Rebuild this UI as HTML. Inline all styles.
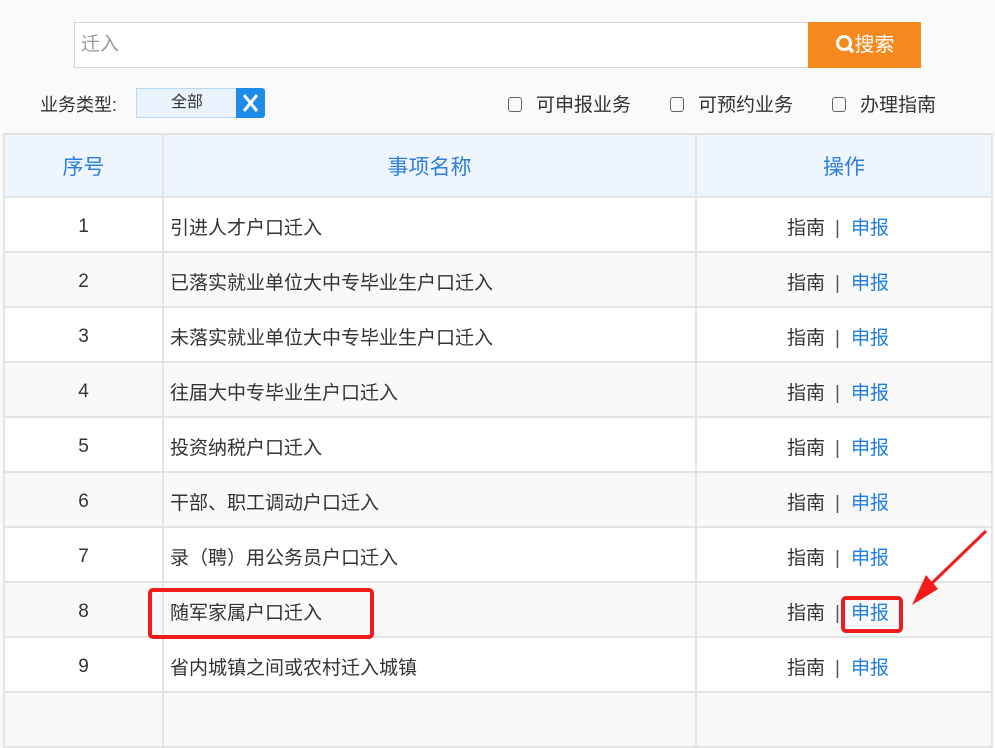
<!DOCTYPE html>
<html><head><meta charset="utf-8">
<style>
*{margin:0;padding:0;box-sizing:border-box}
body{width:995px;height:702px;overflow:hidden;background:#fafafa;font-family:"Liberation Sans","Noto Sans CJK SC",sans-serif;color:#333;position:relative}
.abs{position:absolute}
.search{left:74px;top:22px;width:735px;height:46px;border:1px solid #d6d6d6;background:#fff;font-size:19px;color:#999;line-height:44px;padding-left:6px}
.btn{left:808px;top:22px;width:113px;height:46px;background:#f5891e;color:#fff;font-size:20px;line-height:46px;text-align:center}
.lbl{left:40px;top:91px;font-size:18px;color:#333}
.sel{left:136px;top:88px;width:102px;height:30px;background:#eaf3fd;border:1px solid #b9d8f5;font-size:16px;text-align:center;line-height:28px}
.x{left:236px;top:88px;width:29px;height:30px;background:#1f8be8;border-radius:0 3px 3px 0}
.cb{font-size:19px;top:90px}
.cb i{display:inline-block;width:14px;height:15px;border:1px solid #666;border-radius:3px;vertical-align:-1px;margin-right:14px}
table{position:absolute;left:3px;top:133px;width:990px;border-collapse:collapse;border-top:2px solid #1e87e6}
td,th{border:2px solid #e4e4e4;font-size:19px;font-weight:normal}
th{height:63px;background:#eef5fd;color:#2c7fde;font-size:21px}
td{height:55px;background:#fff;padding-top:3px}
td.n{padding-top:5px}
tr.e td{background:#f9f9f9}
td.n{text-align:center;width:159px}
td.t{padding-left:6px;width:533px}
td.o{text-align:left;padding-left:90px;color:#333}
td.o span{color:#1e7fe0}
td.o b{font-weight:normal;color:#555;margin:0 11px 0 10px}
</style></head><body>
<div class="abs search">迁入</div>
<div class="abs btn"><svg width="20" height="20" viewBox="0 0 20 20" style="vertical-align:-3px"><circle cx="9" cy="9" r="6.5" fill="none" stroke="#fff" stroke-width="3"/><path d="M13 13l5 5" stroke="#fff" stroke-width="3.5"/></svg>搜索</div>
<div class="abs lbl">业务类型:</div>
<div class="abs sel">全部</div>
<div class="abs x"><svg width="29" height="30"><path d="M8 7l13 16M21 7L8 23" stroke="#fff" stroke-width="3"/></svg></div>
<div class="abs cb" style="left:508px"><i></i>可申报业务</div>
<div class="abs cb" style="left:670px"><i></i>可预约业务</div>
<div class="abs cb" style="left:832px"><i></i>办理指南</div>
<table>
<tr><th>序号</th><th>事项名称</th><th>操作</th></tr>
<tr><td class="n">1</td><td class="t">引进人才户口迁入</td><td class="o">指南<b>|</b><span>申报</span></td></tr>
<tr class="e"><td class="n">2</td><td class="t">已落实就业单位大中专毕业生户口迁入</td><td class="o">指南<b>|</b><span>申报</span></td></tr>
<tr><td class="n">3</td><td class="t">未落实就业单位大中专毕业生户口迁入</td><td class="o">指南<b>|</b><span>申报</span></td></tr>
<tr class="e"><td class="n">4</td><td class="t">往届大中专毕业生户口迁入</td><td class="o">指南<b>|</b><span>申报</span></td></tr>
<tr><td class="n">5</td><td class="t">投资纳税户口迁入</td><td class="o">指南<b>|</b><span>申报</span></td></tr>
<tr class="e"><td class="n">6</td><td class="t">干部、职工调动户口迁入</td><td class="o">指南<b>|</b><span>申报</span></td></tr>
<tr><td class="n">7</td><td class="t">录（聘）用公务员户口迁入</td><td class="o">指南<b>|</b><span>申报</span></td></tr>
<tr class="e"><td class="n">8</td><td class="t">随军家属户口迁入</td><td class="o">指南<b>|</b><span>申报</span></td></tr>
<tr><td class="n">9</td><td class="t">省内城镇之间或农村迁入城镇</td><td class="o">指南<b>|</b><span>申报</span></td></tr>
<tr class="e"><td class="n"></td><td class="t"></td><td class="o"></td></tr>
</table>
<div class="abs" style="left:148px;top:588px;width:226px;height:51px;border:4px solid #f01c1c;border-radius:5px"></div>
<div class="abs" style="left:841px;top:596px;width:62px;height:37px;border:4px solid #f01c1c;border-radius:5px"></div>
<svg class="abs" style="left:900px;top:525px" width="95" height="85"><path d="M86 6L28 62" stroke="#f01c1c" stroke-width="3"/><path d="M12 80L26 50L38 64Z" fill="#f01c1c"/></svg>
</body></html>
